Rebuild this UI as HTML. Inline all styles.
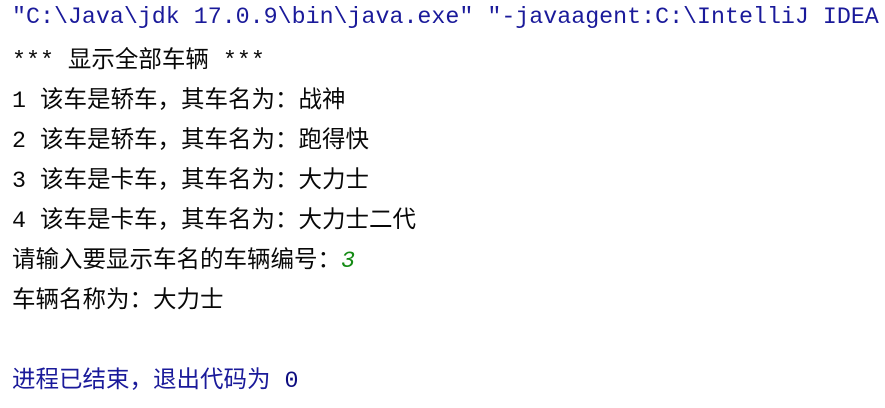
<!DOCTYPE html>
<html><head><meta charset="utf-8"><style>
html,body{margin:0;padding:0;background:#fff;width:885px;height:408px;overflow:hidden}
.c{position:absolute;left:12px;top:-3px;font-family:"Liberation Mono","Noto Sans CJK SC",monospace;font-size:23.3px;color:#080808}
.l{height:40px;line-height:40px;white-space:pre}
.k{font-family:"Noto Sans CJK SC",sans-serif;font-size:23.5px}
.b{color:#1a1a9a}
.g{color:#138a13;font-style:italic}
.n{color:#0d0d80}
</style></head><body>
<div class="c"><div class="l b">"C:\Java\jdk 17.0.9\bin\java.exe" "-javaagent:C:\IntelliJ IDEA</div><div class="l">*** <span class="k">显示全部车辆</span> ***</div><div class="l">1 <span class="k">该车是轿车，其车名为：战神</span></div><div class="l">2 <span class="k">该车是轿车，其车名为：跑得快</span></div><div class="l">3 <span class="k">该车是卡车，其车名为：大力士</span></div><div class="l">4 <span class="k">该车是卡车，其车名为：大力士二代</span></div><div class="l"><span class="k">请输入要显示车名的车辆编号：</span><span class="g">3</span></div><div class="l"><span class="k">车辆名称为：大力士</span></div><div class="l"> </div><div class="l b"><span class="k">进程已结束，退出代码为</span> <span class="n">0</span></div></div>
</body></html>
